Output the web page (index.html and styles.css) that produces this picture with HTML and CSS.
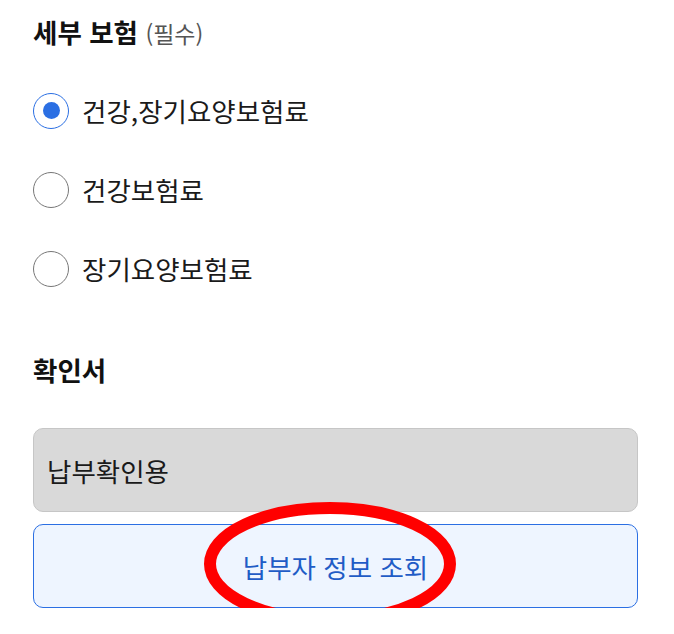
FILE: index.html
```html
<!DOCTYPE html>
<html lang="ko">
<head>
<meta charset="utf-8">
<link rel="stylesheet" href="styles.css">
</head>
<body>
<main class="form">
  <h2 class="title">세부 보험 <span class="req">(필수)</span></h2>
  <div class="radios">
    <label class="radio-row"><span class="radio checked"></span><span class="label">건강,장기요양보험료</span></label>
    <label class="radio-row"><span class="radio"></span><span class="label">건강보험료</span></label>
    <label class="radio-row"><span class="radio"></span><span class="label">장기요양보험료</span></label>
  </div>
  <h2 class="title title2">확인서</h2>
  <div class="select">납부확인용</div>
  <div class="btn-wrap">
    <button class="btn">납부자 정보 조회</button>
    <svg class="mark" width="270" height="140" viewBox="0 0 270 140"><ellipse cx="134" cy="68" rx="120" ry="56" fill="none" stroke="#ff0000" stroke-width="12"/></svg>
  </div>
</main>
</body>
</html>
```
FILE: styles.css
```css
* { box-sizing: border-box; }
body {
  margin: 0;
  background: #fff;
  font-family: "Noto Sans CJK KR", "Noto Sans", sans-serif;
  color: #1a1a1a;
}
.form {
  padding: 12px 0 0 33px;
  width: 638px;
  display: flex;
  flex-direction: column;
}
.title {
  margin: 0;
  font-size: 26.5px;
  font-weight: 700;
  line-height: 40px;
  color: #111;
}
.req {
  font-size: 23px;
  font-weight: 400;
  line-height: 1;
  color: #555;
}
.radios {
  margin-top: 19px;
  display: flex;
  flex-direction: column;
}
.radio-row {
  height: 79px;
  display: flex;
  align-items: center;
  gap: 13px;
}
.radio {
  width: 36px;
  height: 36px;
  border-radius: 50%;
  border: 1px solid #777;
  background: #fff;
  display: flex;
  align-items: center;
  justify-content: center;
}
.radio.checked { border-color: #2b6fe3; }
.radio.checked::after {
  content: "";
  width: 17px;
  height: 17px;
  border-radius: 50%;
  background: #2b6fe3;
}
.label {
  font-size: 26.5px;
  color: #1a1a1a;
}
.title2 { margin-top: 42px; }
.select {
  margin-top: 38px;
  height: 84px;
  background: #d9d9d9;
  border: 1px solid #c6c6c6;
  border-radius: 10px;
  padding-left: 13px;
  display: flex;
  align-items: center;
  font-size: 26.5px;
  color: #1a1a1a;
}
.btn-wrap {
  position: relative;
  margin-top: 12px;
}
.btn {
  width: 100%;
  height: 84px;
  background: #eef5ff;
  border: 1px solid #2b6fe3;
  border-radius: 10px;
  font-family: inherit;
  font-size: 26.5px;
  color: #1f5cc6;
}
.mark {
  position: absolute;
  left: 163px;
  top: -28px;
}
```
